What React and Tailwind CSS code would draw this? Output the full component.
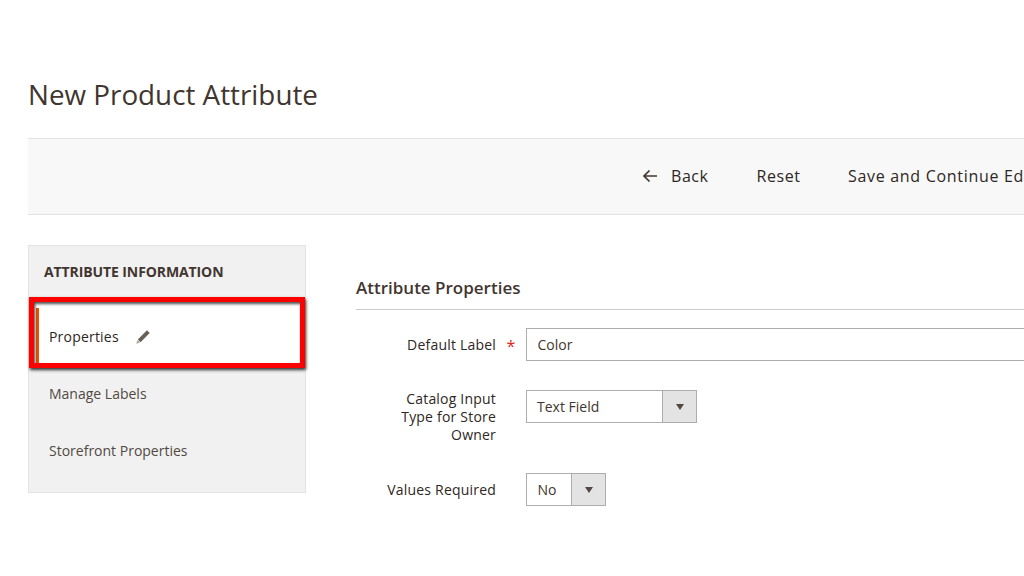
import React from 'react';

const font = { fontFamily: '"Open Sans", sans-serif' };

function Arrow() {
  return (
    <svg width="16" height="14" viewBox="0 0 16 14" fill="none" stroke="#41362f" strokeWidth="1.7" className="shrink-0">
      <path d="M15 7H2M7.5 1.5 2 7l5.5 5.5" />
    </svg>
  );
}

function Pencil() {
  return (
    <svg width="14" height="14" viewBox="0 0 14 14" className="ml-[17px] shrink-0">
      <path d="M11 .3 13.7 3 4.5 12.2 1.8 9.5z" fill="#676056" />
      <path d="M1.4 10 4 12.6 .3 13.7z" fill="#a8a39b" />
    </svg>
  );
}

function SelectBox({ value, width, textClass }) {
  return (
    <div className={`flex h-[33px] border border-[#adadad] bg-white ${width}`}>
      <div className={`flex items-center text-[14px] text-[#41362f] ${textClass}`}>{value}</div>
      <div className="flex flex-1 items-center justify-center border-l border-[#adadad] bg-[#e3e3e3]">
        <div className="h-0 w-0 border-x-[4.5px] border-t-[6px] border-x-transparent border-t-[#514943]" />
      </div>
    </div>
  );
}

export default function App() {
  return (
    <div className="relative h-[576px] w-[1024px] overflow-hidden bg-white" style={font}>
      <h1 className="pl-[28px] pt-[74px] pb-[1px] text-[27.8px] leading-[40px] font-normal text-[#41362f]">New Product Attribute</h1>

      <div className="mt-[23px] ml-[28px] flex h-[77px] w-[996px] items-center whitespace-nowrap border-y border-[#e3e3e3] bg-[#f8f8f8] pb-[2px] pl-[614px] text-[16px] font-medium tracking-[0.55px] text-[#2e2723]">
        <Arrow />
        <span className="ml-[13px]">Back</span>
        <span className="ml-[48px]">Reset</span>
        <span className="ml-[47.5px] tracking-[0.7px]">Save and Continue Edit</span>
      </div>

      <div className="mt-[30px] ml-[28px] flex">
        <div className="h-[248px] w-[278px] border border-[#e3e3e3] bg-[#f1f1f1]">
          <div className="h-[56px] pl-[15px] pt-[16px] text-[14px] leading-[20px] font-bold tracking-[-0.1px] text-[#41362f]">ATTRIBUTE INFORMATION</div>
          <div className="ml-[7px] h-[6px] bg-white" />
          <div className="ml-[7px] flex h-[57px] items-center border-l-[3px] border-[#eb5202] bg-white pl-[10px] text-[14px] font-medium tracking-[0.2px] text-[#2e2723]">
            <span>Properties</span>
            <Pencil />
          </div>
          <div className="flex h-[57px] items-center pl-[20px] text-[14px] text-[#514943]">Manage Labels</div>
          <div className="flex h-[57px] items-center pl-[20px] text-[14px] text-[#514943]">Storefront Properties</div>
        </div>

        <div className="ml-[50px] flex-1">
          <h2 className="h-[65px] border-b border-[#cccccc] pt-[31px] text-[17px] leading-[24px] font-semibold text-[#41362f]">Attribute Properties</h2>

          <div className="mt-[18px] flex">
            <div className="flex h-[33px] w-[140px] items-center justify-end text-[14px] font-medium tracking-[0.2px] text-[#2e2723]">Default Label</div>
            <div className="flex w-[30px] items-center justify-center pt-[3px] text-[16px] text-[#e22626]">*</div>
            <div className="flex h-[33px] flex-1 items-center border-y border-l border-[#adadad] pl-[10.5px] text-[14px] text-[#41362f]">Color</div>
          </div>

          <div className="mt-[29px] flex">
            <div className="w-[140px] text-right text-[14px] leading-[18px] font-medium tracking-[0.2px] text-[#2e2723]">
              Catalog Input<br />Type for Store<br />Owner
            </div>
            <div className="ml-[30px]">
              <SelectBox value="Text Field" width="w-[171px]" textClass="w-[135px] pl-[10px]" />
            </div>
          </div>

          <div className="mt-[29px] flex">
            <div className="flex h-[33px] w-[140px] items-center justify-end text-[14px] font-medium tracking-[0.2px] text-[#2e2723]">Values Required</div>
            <div className="ml-[30px]">
              <SelectBox value="No" width="w-[80px]" textClass="w-[44px] pl-[10.5px]" />
            </div>
          </div>
        </div>
      </div>

      {/* red highlight drawn over the screenshot */}
      <div className="absolute left-[29px] top-[297px] h-[71px] w-[276px] border-[5px] border-[#ff0000] shadow-[1px_2px_3px_rgba(0,0,0,0.8),inset_1px_2px_3px_rgba(0,0,0,0.7)]" />
    </div>
  );
}
